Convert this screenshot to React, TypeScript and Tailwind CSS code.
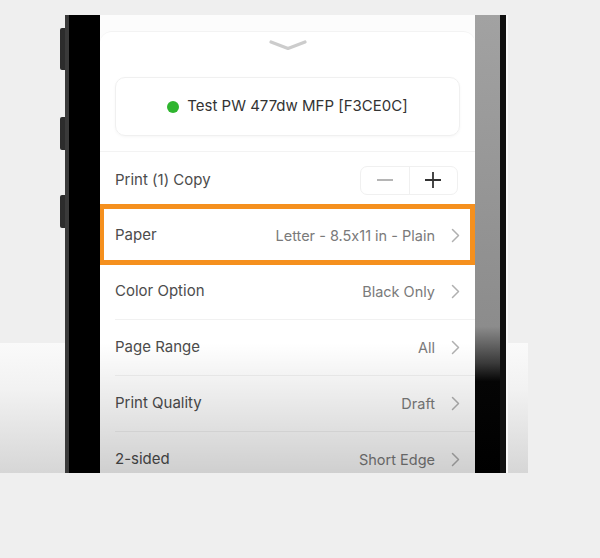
const rows = [
  { label: 'Color Option', value: 'Black Only' },
  { label: 'Page Range', value: 'All' },
  { label: 'Print Quality', value: 'Draft' },
  { label: '2-sided', value: 'Short Edge' },
];

function Chevron() {
  return (
    <svg className="ml-[16px] shrink-0" width="9" height="15" viewBox="0 0 9 15">
      <path d="M1.5 1.5 L7.5 7.5 L1.5 13.5" fill="none" stroke="#b0b0b0" strokeWidth="1.5" strokeLinecap="round" strokeLinejoin="round" />
    </svg>
  );
}

function Row({ label, value }: { label: string; value: string }) {
  return (
    <div className="shrink-0 pl-[15px]">
      <div className="flex h-[56px] items-center border-b border-[#f1f1f1] pr-[15px]">
        <span className="text-[15px] text-[#4c4c4c]">{label}</span>
        <span className="ml-auto text-[14.5px] text-[#7a7a7a]">{value}</span>
        <Chevron />
      </div>
    </div>
  );
}

export default function App() {
  return (
    <div
      className="relative h-[558px] w-[600px] overflow-hidden bg-[#efefef] [font-feature-settings:'calt'_0]"
      style={{ fontFamily: 'Inter, "Noto Sans", sans-serif' }}
    >
      <div className="flex pl-[60px] pt-[15px]">
        {/* side buttons */}
        <div className="flex w-[5px] flex-col">
          <div className="mt-[13px] h-[42px] rounded-l-[2px] bg-[#2c2c2c]" />
          <div className="mt-[47px] h-[33px] rounded-l-[2px] bg-[#2c2c2c]" />
          <div className="mt-[45px] h-[33px] rounded-l-[2px] bg-[#2c2c2c]" />
        </div>

        {/* phone body */}
        <div className="flex h-[458px]">
          <div className="w-[4px] bg-[#3a3a3a]" />
          <div className="w-[31px] bg-black" />

          {/* screen */}
          <div className="relative flex w-[375px] flex-col overflow-hidden bg-[#fcfcfc]">
            <div className="h-[16px] shrink-0" />
            <div className="flex shrink-0 flex-col rounded-t-[12px] border-t border-[#f3f3f3] bg-white">
              <div className="flex h-[45px] shrink-0 justify-center pt-[8px]">
                <svg width="38" height="11" viewBox="0 0 38 11">
                  <path d="M2 2 L19 8.5 L36 2" fill="none" stroke="#cccccc" strokeWidth="3.2" strokeLinecap="round" strokeLinejoin="round" />
                </svg>
              </div>

              <div className="mx-[15px] flex h-[59px] shrink-0 items-center justify-center gap-[8px] rounded-[10px] border border-[#f0f0f0] shadow-[0_1px_3px_rgba(0,0,0,0.04)]">
                <span className="h-[12px] w-[12px] rounded-full bg-[#2fb52f]" />
                <span className="text-[15px] text-[#333333]">Test PW 477dw MFP [F3CE0C]</span>
              </div>

              <div className="h-[16px] shrink-0 border-b border-[#f3f3f3]" />

              <div className="flex h-[56px] shrink-0 items-center pl-[15px] pr-[17px]">
                <span className="text-[15px] text-[#4c4c4c]">Print (1) Copy</span>
                <div className="ml-auto flex h-[29px] w-[98px] items-center rounded-[7px] border border-[#f0f0f0]">
                  <div className="flex h-full flex-1 items-center justify-center border-r border-[#f0f0f0]">
                    <svg width="18" height="18" viewBox="0 0 18 18">
                      <path d="M1 9 H17" stroke="#a3a3a3" strokeWidth="1.6" />
                    </svg>
                  </div>
                  <div className="flex h-full flex-1 items-center justify-center">
                    <svg width="18" height="18" viewBox="0 0 18 18">
                      <path d="M1 9 H17 M9 1 V17" stroke="#333" strokeWidth="1.8" />
                    </svg>
                  </div>
                </div>
              </div>

              <div className="relative shrink-0">
                <div className="flex h-[56px] items-center border-b border-[#f1f1f1] pl-[15px] pr-[15px]">
                  <span className="text-[15px] text-[#4c4c4c]">Paper</span>
                  <span className="ml-auto text-[14.5px] text-[#7a7a7a]">Letter - 8.5x11 in - Plain</span>
                  <Chevron />
                </div>
                <div className="pointer-events-none absolute -left-[1px] right-0 -top-[4px] -bottom-[1px] border-[5px] border-[#f5901e]" />
              </div>

              {rows.map(r => (
                <Row key={r.label} label={r.label} value={r.value} />
              ))}
            </div>

            {/* fade over lower part of screen */}
            <div className="pointer-events-none absolute inset-x-0 bottom-0 h-[130px] bg-[linear-gradient(to_bottom,rgba(0,0,0,0),rgba(0,0,0,0.19))]" />
          </div>

          <div className="w-[25px] bg-[linear-gradient(to_bottom,#a2a2a2_0%,#8c8c8c_68%,#3a3a3a_76%,#050505_80%,#000_100%)]" />
          <div className="w-[6px] bg-[#111]" />
          <div className="w-[2px] bg-[#fafafa]" />
        </div>
      </div>

      {/* light band either side of the phone */}
      <div className="pointer-events-none absolute left-0 top-[343px] h-[130px] w-[65px] bg-[linear-gradient(to_bottom,#fafafa,#f2f2f2_35%,#d6d6d6)]" />
      <div className="pointer-events-none absolute left-[508px] top-[343px] h-[130px] w-[20px] bg-[linear-gradient(to_bottom,#fafafa,#f2f2f2_35%,#d6d6d6)]" />
    </div>
  );
}
